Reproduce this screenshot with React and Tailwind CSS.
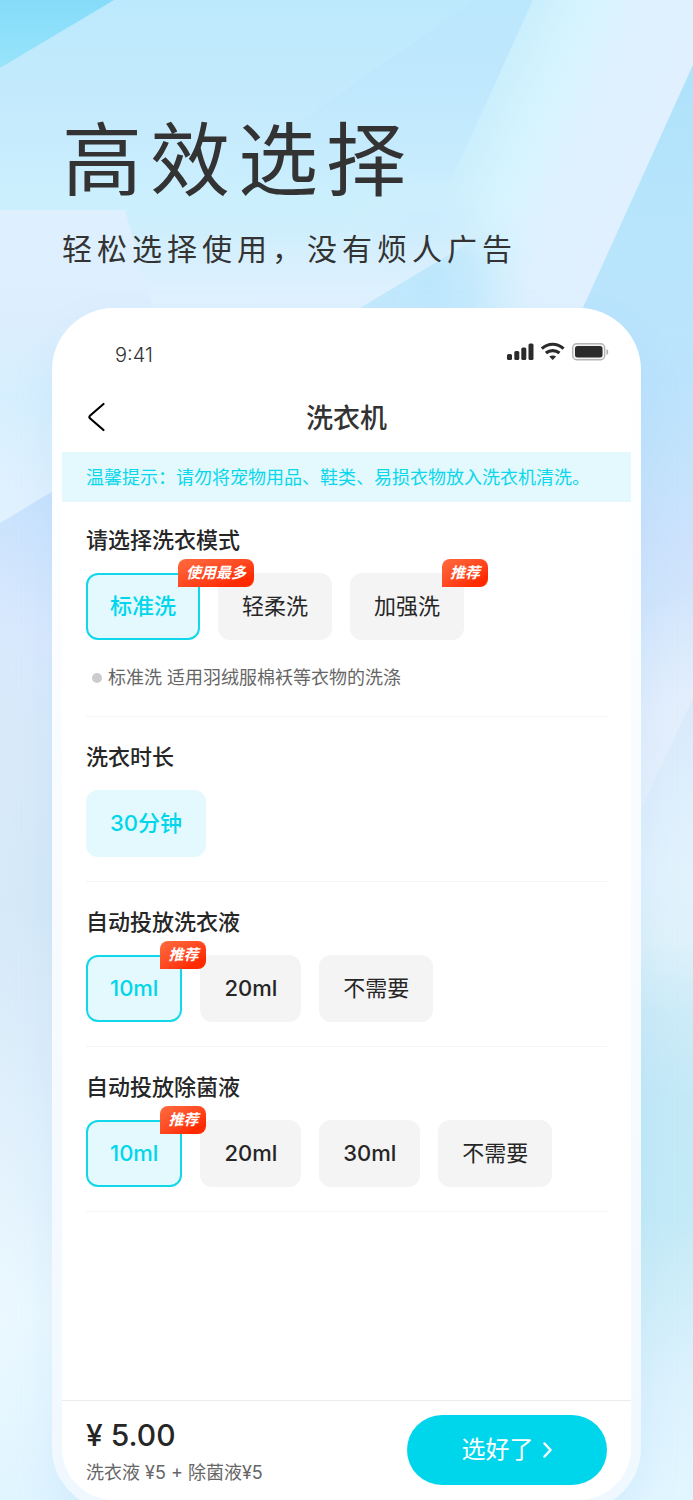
import React, { useState } from 'react';

const groups = [
  {
    id: 'mode',
    title: '请选择洗衣模式',
    options: [
      { label: '标准洗', badge: '使用最多' },
      { label: '轻柔洗' },
      { label: '加强洗', badge: '推荐' },
    ],
    note: '标准洗 适用羽绒服棉袄等衣物的洗涤',
  },
  {
    id: 'duration',
    title: '洗衣时长',
    options: [{ label: '30分钟', plain: true }],
  },
  {
    id: 'detergent',
    title: '自动投放洗衣液',
    options: [{ label: '10ml', badge: '推荐' }, { label: '20ml' }, { label: '不需要' }],
  },
  {
    id: 'sanitizer',
    title: '自动投放除菌液',
    options: [{ label: '10ml', badge: '推荐' }, { label: '20ml' }, { label: '30ml' }, { label: '不需要' }],
  },
];

const Backdrop = () => (
  <svg
    className="absolute inset-0 h-full w-full"
    viewBox="0 0 693 1500"
    preserveAspectRatio="none"
    aria-hidden="true"
  >
    <defs>
      <linearGradient id="base" x1="0" y1="0" x2="0" y2="1">
        <stop offset="0" stopColor="#bde9fc" />
        <stop offset="0.09" stopColor="#c6ebfd" />
        <stop offset="0.14" stopColor="#ccf0fd" />
        <stop offset="0.2" stopColor="#bfe7fc" />
        <stop offset="1" stopColor="#d8effd" />
      </linearGradient>
      <linearGradient id="corner" x1="0" y1="0" x2="0" y2="1">
        <stop offset="0" stopColor="#85dcf9" />
        <stop offset="1" stopColor="#98e4fb" />
      </linearGradient>
      <linearGradient id="fold" x1="0" y1="0" x2="0" y2="1">
        <stop offset="0" stopColor="#b9e5fb" stopOpacity="0.4" />
        <stop offset="0.4" stopColor="#bfe7fd" />
        <stop offset="1" stopColor="#c6ecfd" stopOpacity="0" />
      </linearGradient>
      <linearGradient id="beam" gradientUnits="userSpaceOnUse" x1="480" y1="117" x2="637" y2="188">
        <stop offset="0" stopColor="#cbeffd" />
        <stop offset="0.3" stopColor="#d6f4fe" />
        <stop offset="0.65" stopColor="#dff1fe" />
        <stop offset="1" stopColor="#e1f0fe" />
      </linearGradient>
      <radialGradient id="beamShade" gradientUnits="userSpaceOnUse" cx="430" cy="285" r="115">
        <stop offset="0" stopColor="#bce6fc" />
        <stop offset="0.4" stopColor="#c2e8fc" stopOpacity="0.8" />
        <stop offset="1" stopColor="#d8effe" stopOpacity="0" />
      </radialGradient>
      <linearGradient id="right" gradientUnits="userSpaceOnUse" x1="0" y1="65" x2="0" y2="1500">
        <stop offset="0" stopColor="#aee2fb" />
        <stop offset="0.12" stopColor="#b8e5fc" />
        <stop offset="0.22" stopColor="#bce3fd" />
        <stop offset="0.27" stopColor="#c2e3fc" />
        <stop offset="0.33" stopColor="#cce2fc" />
        <stop offset="0.38" stopColor="#d2e6fc" />
        <stop offset="0.48" stopColor="#dcecfb" />
        <stop offset="0.56" stopColor="#e2f2fd" />
        <stop offset="0.61" stopColor="#def2fa" />
        <stop offset="0.66" stopColor="#cdebf8" />
        <stop offset="0.72" stopColor="#c3e9f7" />
        <stop offset="0.8" stopColor="#c3eaf7" />
        <stop offset="0.86" stopColor="#d0eef9" />
        <stop offset="0.92" stopColor="#dcf2fd" />
        <stop offset="1" stopColor="#e2f6ff" />
      </linearGradient>
      <linearGradient id="plate" x1="0" y1="0" x2="0" y2="1">
        <stop offset="0" stopColor="#def0fe" />
        <stop offset="0.3" stopColor="#ddeefe" />
        <stop offset="0.6" stopColor="#d6effe" />
        <stop offset="1" stopColor="#e2f1fe" />
      </linearGradient>
      <linearGradient id="shard" gradientUnits="userSpaceOnUse" x1="0" y1="215" x2="0" y2="400">
        <stop offset="0" stopColor="#d8f1fd" stopOpacity="0" />
        <stop offset="0.2" stopColor="#daf0fd" stopOpacity="0.8" />
        <stop offset="0.45" stopColor="#dff1fe" />
        <stop offset="1" stopColor="#dfeffe" />
      </linearGradient>
      <linearGradient id="left" x1="0" y1="0" x2="0" y2="1">
        <stop offset="0" stopColor="#c6e1fc" />
        <stop offset="0.08" stopColor="#d0e5fd" />
        <stop offset="0.16" stopColor="#d9e9fd" />
        <stop offset="0.25" stopColor="#d8eafa" />
        <stop offset="0.42" stopColor="#d5e9f8" />
        <stop offset="0.6" stopColor="#dfeffb" />
        <stop offset="0.82" stopColor="#ebf8ff" />
        <stop offset="1" stopColor="#e0f5ff" />
      </linearGradient>
      <linearGradient id="glint" gradientUnits="userSpaceOnUse" x1="660" y1="600" x2="693" y2="700">
        <stop offset="0" stopColor="#e8effd" stopOpacity="0" />
        <stop offset="1" stopColor="#eaf1fd" stopOpacity="0.6" />
      </linearGradient>
    </defs>
    <rect width="693" height="1500" fill="url(#base)" />
    <polygon points="475,0 533,0 443,198 190,198" fill="url(#fold)" />
    <polygon points="533,0 693,0 693,65 583,308 560,359 370,359" fill="url(#beam)" />
    <rect x="300" y="150" width="260" height="200" fill="url(#beamShade)" />
    <polygon points="693,65 693,1500 560,1500 560,359" fill="url(#right)" />
    <polygon points="0,215 485,215 500,224 360,308 360,420 0,523" fill="url(#shard)" />
    <polygon points="0,210 125,210 153,308 153,440 0,523" fill="url(#plate)" />
    <polygon points="0,523 80,475 120,475 120,1500 0,1500" fill="url(#left)" />
    <polygon points="0,0 114,0 0,68" fill="url(#corner)" />
    <polygon points="693,560 693,698 663,762 641,810 641,560" fill="url(#glint)" />
  </svg>
);

const StatusIcons = () => (
  <svg width="103" height="20" viewBox="0 0 103 20" fill="#2b2b2b" aria-hidden="true">
    <rect x="0" y="12" width="5" height="6" rx="1.5" />
    <rect x="7.3" y="9" width="5" height="9" rx="1.5" />
    <rect x="14.3" y="5.5" width="5" height="12.5" rx="1.5" />
    <rect x="21.5" y="1.5" width="5" height="16.5" rx="1.5" />
    <g fill="none" stroke="#2b2b2b" strokeWidth="3.2">
      <path d="M34.8 6.6C41.3 0.8 50.1 0.8 56.6 6.6" />
      <path d="M38.9 11C42.9 7.7 48.5 7.7 52.5 11" />
    </g>
    <path d="M42.3 14.6C44.3 13 47.1 13 49.1 14.6L45.7 18Z" />
    <rect x="65.7" y="1.7" width="32" height="16" rx="4" fill="#f4f4f4" stroke="#b5b5b5" strokeWidth="1.4" />
    <rect x="68" y="4" width="27.5" height="11.5" rx="2.5" />
    <path d="M99.5 7C101.8 8 101.8 12 99.5 13Z" fill="#aaaaaa" />
  </svg>
);

const Badge = ({ children }) => (
  <span className="absolute left-full -top-4 z-10 -ml-5 h-7 whitespace-nowrap rounded-lg rounded-bl-none bg-linear-to-br from-[#ff6a3d] to-[#ff2a00] to-80% px-2 text-[15px] leading-7 font-bold italic text-white">
    {children}
  </span>
);

const Option = ({ option, active, onSelect }) => {
  let look = 'border-[#f4f4f4] bg-[#f4f4f4] text-[#262626]';
  if (active) {
    look = option.plain
      ? 'border-[#e3f9fd] bg-[#e3f9fd] text-[#00d6eb]'
      : 'border-[#10d8ea] bg-[#e3f9fd] text-[#00d6eb]';
  }
  const latin = /^\d/.test(option.label);

  return (
    <button
      type="button"
      aria-pressed={active}
      onClick={onSelect}
      className={`relative h-[67px] rounded-xl border-2 px-[22px] text-[22px] whitespace-nowrap ${look} ${active || latin ? 'font-medium' : 'font-normal'}`}
    >
      {option.label}
      {option.badge && <Badge>{option.badge}</Badge>}
    </button>
  );
};

const App = () => {
  const [selected, setSelected] = useState({
    mode: '标准洗',
    duration: '30分钟',
    detergent: '10ml',
    sanitizer: '10ml',
  });

  const select = (id, label) => setSelected({ ...selected, [id]: label });

  return (
    <div
      lang="zh-CN"
      className="relative flex min-h-screen flex-col overflow-hidden font-['Inter','Noto_Sans_CJK_SC',sans-serif] text-[#262626]"
    >
      <Backdrop />

      <header className="relative px-[62px] pt-28 pb-[34px] text-[#333333]">
        <h1 className="text-[80px] leading-[96px] tracking-widest">高效选择</h1>
        <p className="mt-4 text-[30px] leading-[50px] tracking-[5px]">轻松选择使用，没有烦人广告</p>
      </header>

      {/* Phone */}
      <div className="relative mx-[52px] -mb-2.5 flex flex-1 flex-col rounded-[62px] bg-linear-to-b from-white to-[#f0f8ff] px-2.5 pb-2.5 shadow-[0_20px_40px_rgba(130,190,240,0.15)]">
        <div className="flex flex-1 flex-col overflow-hidden rounded-[52px] bg-white">
          <div className="flex h-[76px] items-center justify-between pt-3 pr-[21px] pl-[53px]">
            <span className="pt-1.5 text-[20px] font-light text-[#333333]">9:41</span>
            <StatusIcons />
          </div>

          <nav className="grid h-[68px] grid-cols-[1fr_auto_1fr] items-center px-6">
            <button type="button" aria-label="返回" className="justify-self-start">
              <svg width="22" height="32" viewBox="0 0 22 32" fill="none" stroke="#000000" strokeWidth="2.2" strokeLinecap="round" strokeLinejoin="round">
                <path d="M17.5 2L4.2 13.5Q2.5 15 4.2 16.5L17.5 28" />
              </svg>
            </button>
            <h2 className="pt-0.5 text-[27px] leading-9 font-medium text-[#333333]">洗衣机</h2>
          </nav>

          <p className="bg-[#e3f9fd] px-6 pt-0.5 text-[18px] leading-[48px] text-[#0ad6ec]">
            温馨提示：请勿将宠物用品、鞋类、易损衣物放入洗衣机清洗。
          </p>

          <main className="flex-1 px-6 pb-8">
            {groups.map((group) => (
              <section key={group.id} className="border-b border-[#f4f4f4] py-6 first:pt-[22px]">
                <h3 className="text-[22px] leading-8 font-medium">{group.title}</h3>
                <div className="mt-[17px] flex flex-wrap gap-[18px]">
                  {group.options.map((option) => (
                    <Option
                      key={option.label}
                      option={option}
                      active={selected[group.id] === option.label}
                      onSelect={() => select(group.id, option.label)}
                    />
                  ))}
                </div>
                {group.note && (
                  <p className="mt-6 flex items-center gap-1.5 pl-1.5 text-[18px] leading-7 text-[#666666]">
                    <span className="size-2.5 rounded-full bg-[#cccccc]" />
                    {group.note}
                  </p>
                )}
              </section>
            ))}
          </main>

          <footer className="flex items-start justify-between border-t border-[#ececec] px-6 pt-3.5 pb-[9px]">
            <div>
              <p className="text-[30px] leading-10 font-medium">¥ 5.00</p>
              <p className="text-[18px] leading-9 text-[#666666]">洗衣液 ¥5 + 除菌液¥5</p>
            </div>
            <button
              type="button"
              className="flex h-[70px] w-[200px] items-center justify-center gap-2 rounded-full bg-[#00d6eb] text-[24px] text-white"
            >
              选好了
              <svg width="11" height="18" viewBox="0 0 11 18" fill="none" stroke="currentColor" strokeWidth="2.5" strokeLinecap="round" strokeLinejoin="round">
                <path d="M2.5 2.5L8.5 9L2.5 15.5" />
              </svg>
            </button>
          </footer>
        </div>
      </div>
    </div>
  );
};

export default App;
